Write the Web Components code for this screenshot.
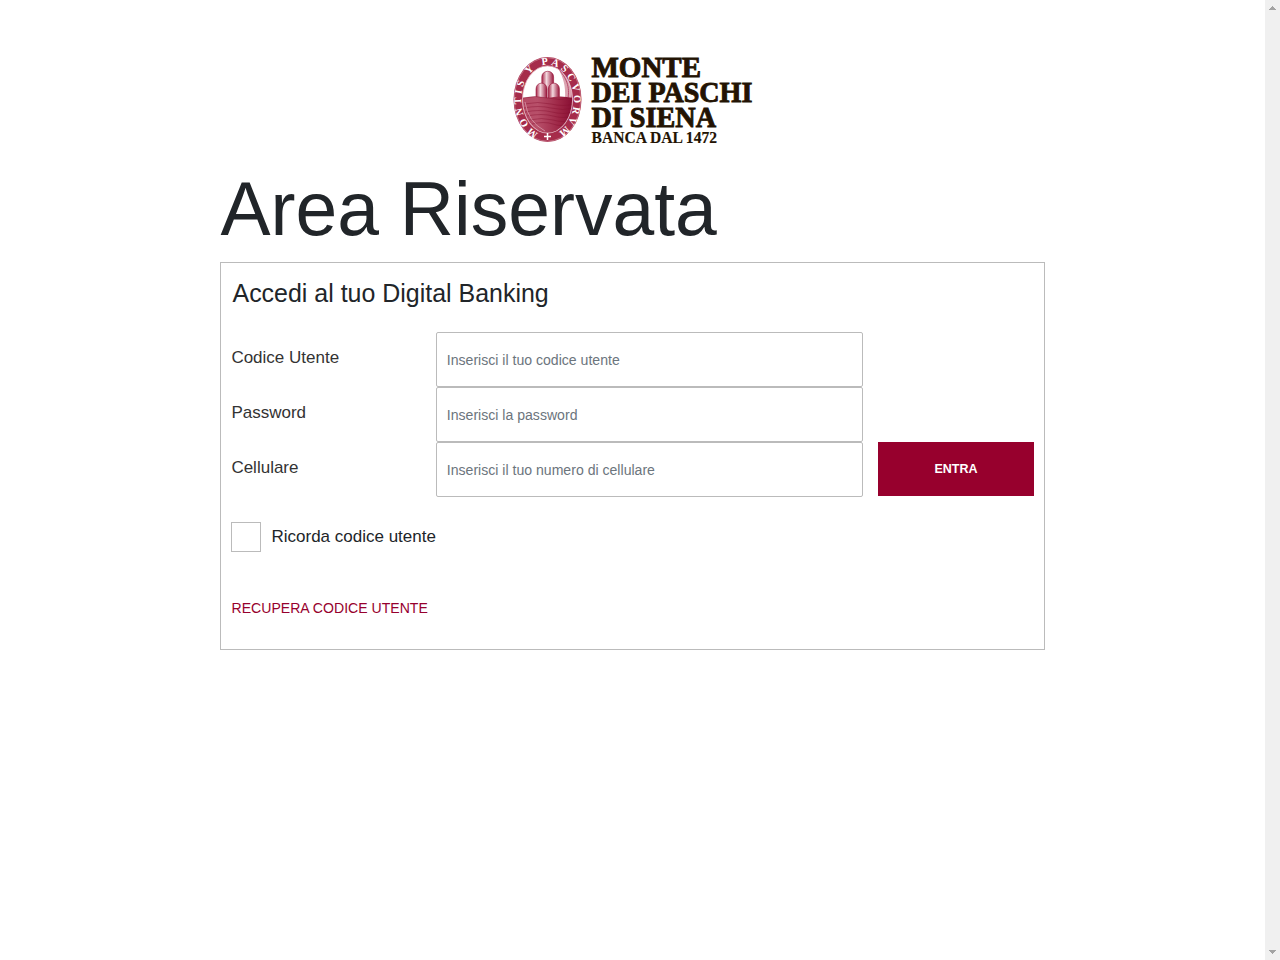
<!DOCTYPE html>
<html lang="it">
<head>
<meta charset="utf-8">
<title>Area Riservata</title>
<style>
html, body { margin: 0; height: 100%; overflow: hidden; background: #fff; font-family: "Liberation Sans", Arial, sans-serif; color: #212529; }
</style>
</head>
<body>
<login-page></login-page>
<script>
function define(name, html) {
  const template = document.createElement('template');
  template.innerHTML = html;
  customElements.define(name, class extends HTMLElement {
    constructor() {
      super();
      this.attachShadow({ mode: 'open' }).appendChild(template.content.cloneNode(true));
    }
  });
}

define('bank-logo', `
<style>
:host { display: block; width: 240px; height: 88px; }
svg { display: block; overflow: visible; }
.words { font-family: "Liberation Serif", serif; font-weight: 700; fill: #231303; stroke: #231303; }
.ring { font-family: "Liberation Serif", serif; font-weight: 700; font-size: 10.4px; fill: #fff; }
</style>
<svg width="240" height="88" viewBox="0 0 240 88">
  <defs>
    <path id="arc" d="M25.5 77A26.3 35.2 0 1 1 43.5 77"/>
    <clipPath id="inner"><ellipse cx="34.5" cy="43.5" rx="24.6" ry="33.2"/></clipPath>
    <linearGradient id="bowl" x1="0" x2="1"><stop offset="0" stop-color="#b64a65"/><stop offset=".3" stop-color="#b8506a"/><stop offset=".75" stop-color="#9c2444"/><stop offset="1" stop-color="#870d32"/></linearGradient>
    <linearGradient id="hill" x1="0" x2="1"><stop offset="0" stop-color="#a52447"/><stop offset=".4" stop-color="#f3d9df"/><stop offset="1" stop-color="#98143a"/></linearGradient>
  </defs>
  <ellipse cx="34.5" cy="43.5" rx="34" ry="42.5" fill="#a62c4b"/>
  <ellipse cx="34.5" cy="43.5" rx="33.2" ry="41.7" fill="none" stroke="#dba3b1" stroke-width=".5"/>
  <ellipse cx="34.5" cy="43.5" rx="25" ry="33.6" fill="#fff" stroke="#e8bdc8" stroke-width=".8"/>
  <g clip-path="url(#inner)">
    <path d="M42 8C64 20 62 42 56 48L52 42C53 28 49 17 42 8Z" fill="#dba3b0"/>
    <path d="M44 9C62 23 60 39 58 45M42 10C57 23 56 35 55 43" fill="none" stroke="#b5486a" stroke-width="1"/>
    <g fill="url(#hill)" stroke="#98153a" stroke-width=".6">
      <path d="M28.8 42V21C28.8 13.4 40.6 13.4 40.6 21V42Z"/>
      <path d="M23 43V33C23 25.2 34 25.2 34 33V43Z"/>
      <path d="M35.4 43V33C35.4 25.2 46.4 25.2 46.4 33V43Z"/>
    </g>
    <path d="M9 42Q22 39 34.5 42Q47 39 60 42V78H9Z" fill="url(#bowl)"/>
    <g fill="none" stroke="#861031" stroke-width=".7" opacity=".6">
      <path d="M10 42Q22 39 34.5 42T59 42M11 48Q25 45 38 48T60 48M11 52Q26 49 38 52T60 52M12 56Q27 53 39 56T60 56M14 60Q29 57 40 60T58 60M16 64Q29 61 40 64T56 64M19 68Q31 65 40 68T52 68"/>
    </g>
    <path d="M12 46Q15 66 32 75" stroke="#d89aaa" stroke-width=".8" fill="none"/>
  </g>
  <text class="ring" textLength="173" lengthAdjust="spacing"><textPath href="#arc" startOffset="0" textLength="173" lengthAdjust="spacing">MONTIS Y PASCVORVM</textPath></text>
  <path d="M34.5 77v7M31 80.5h7" stroke="#fff" stroke-width="1.5"/>
  <g class="words">
    <text x="78.5" y="20.6" font-size="29.5" stroke-width=".9" textLength="109.5" lengthAdjust="spacingAndGlyphs">MONTE</text>
    <text x="78.5" y="45.6" font-size="29.5" stroke-width=".9" textLength="160.8" lengthAdjust="spacingAndGlyphs">DEI PASCHI</text>
    <text x="78.5" y="70.6" font-size="29.5" stroke-width=".9" textLength="124.5" lengthAdjust="spacingAndGlyphs">DI SIENA</text>
    <text x="78.5" y="86.6" font-size="16" stroke-width=".15" textLength="125.5" lengthAdjust="spacingAndGlyphs">BANCA DAL 1472</text>
  </g>
</svg>`);

define('form-row', `
<style>
:host { display: grid; grid-template-columns: 205px 427px 156px; height: 55px; }
.label { font-size: 17px; line-height: 20px; padding: 16px 0 0 .4px; color: #333; }
.action { margin-left: 15px; width: 156px; }
</style>
<div class="label"><slot name="label"></slot></div>
<slot></slot>
<div class="action"><slot name="action"></slot></div>`);

customElements.define('text-field', class extends HTMLElement {
  constructor() {
    super();
    this.attachShadow({ mode: 'open' }).innerHTML = `
<style>
:host { display: block; }
input { box-sizing: border-box; display: block; width: 100%; height: 55px; margin: 0; padding: 1px 10px 0 9.8px; border: 1px solid #bbb; border-radius: 2px; background: #fff; outline: 0; font: 14.08px "Liberation Sans", Arial, sans-serif; color: #212529; }
input::placeholder { color: #6c757d; opacity: 1; }
</style>
<input autocomplete="off">`;
    const input = this.shadowRoot.querySelector('input');
    input.type = this.getAttribute('type') || 'text';
    input.placeholder = this.getAttribute('placeholder') || '';
  }
});

define('primary-button', `
<style>
:host { display: block; }
button { display: block; width: 156px; height: 54px; margin: 0; padding: 0; border: 0; background: #97002d; color: #fff; font: 700 12.5px "Liberation Sans", Arial, sans-serif; }
</style>
<button type="button"><slot></slot></button>`);

define('check-option', `
<style>
:host { display: flex; align-items: center; gap: 10.5px; height: 30px; font-size: 17px; }
i { box-sizing: border-box; width: 30px; height: 30px; border: 1px solid #bbb; background: #fff; }
span { line-height: 20px; margin-top: -1px; }
</style>
<i></i><span><slot></slot></span>`);

define('login-card', `
<style>
:host { display: block; box-sizing: border-box; width: 825px; height: 388px; border: 1px solid #bbb; padding: 0 10px; }
h2 { margin: 0; padding: 15px 0 0 1.5px; height: 54px; font-size: 24.96px; font-weight: 400; line-height: 30px; }
check-option { margin-top: 25px; }
a { display: block; margin: 48px 0 0 .5px; font-size: 14.08px; line-height: 16px; color: #97002d; text-decoration: none; }
</style>
<h2>Accedi al tuo Digital Banking</h2>
<form-row><span slot="label">Codice Utente</span><text-field placeholder="Inserisci il tuo codice utente"></text-field></form-row>
<form-row><span slot="label">Password</span><text-field type="password" placeholder="Inserisci la password"></text-field></form-row>
<form-row><span slot="label">Cellulare</span><text-field placeholder="Inserisci il tuo numero di cellulare"></text-field><primary-button slot="action">ENTRA</primary-button></form-row>
<check-option>Ricorda codice utente</check-option>
<a>RECUPERA CODICE UTENTE</a>`);

define('scroll-rail', `
<style>
:host { display: flex; flex-direction: column; justify-content: space-between; width: 15px; background: #f0f0f0; }
svg { display: block; }
</style>
<svg width="15" height="15" shape-rendering="crispEdges"><path d="M4 9h7v1H4zM5 8h5v1H5zM6 7h3v1H6zM7 6h1v1H7z" fill="#a3a3a3"/></svg>
<svg width="15" height="15" shape-rendering="crispEdges"><path d="M4 5h7v1H4zM5 6h5v1H5zM6 7h3v1H6zM7 8h1v1H7z" fill="#a3a3a3"/></svg>`);

define('login-page', `
<style>
:host { display: flex; height: 100vh; }
main { flex: 1; display: flex; flex-direction: column; align-items: center; padding-top: 56px; }
h1 { box-sizing: border-box; width: 825px; margin: 19px 0 0; padding-left: .5px; height: 99px; font-size: 75.04px; font-weight: 400; line-height: 92px; }
</style>
<main>
  <bank-logo></bank-logo>
  <h1>Area Riservata</h1>
  <login-card></login-card>
</main>
<scroll-rail></scroll-rail>`);
</script>
</body>
</html>
